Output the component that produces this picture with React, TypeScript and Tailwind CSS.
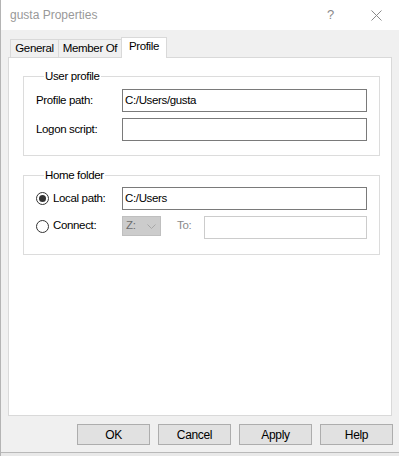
import React from "react";

function Radio({ checked }: { checked?: boolean }) {
  return (
    <span className="flex h-[13px] w-[13px] shrink-0 items-center justify-center rounded-full border border-[#333333] bg-white">
      {checked && <span className="h-[7px] w-[7px] rounded-full bg-[#333333]" />}
    </span>
  );
}

function TextBox({ value, disabled }: { value?: string; disabled?: boolean }) {
  return (
    <div
      className={`flex h-[23px] flex-1 items-center bg-white pl-[2px] text-black ${
        disabled ? "border border-[#cccccc]" : "border border-[#7a7a7a]"
      }`}
    >
      {value}
    </div>
  );
}

function Group({ title, children }: { title: string; children: React.ReactNode }) {
  return (
    <fieldset className="border border-[#dcdcdc] pl-[12px] pr-[12px]">
      <legend className="ml-[8px] px-[1px] leading-[14px] text-black">{title}</legend>
      {children}
    </fieldset>
  );
}

function Button({ label }: { label: string }) {
  return (
    <button className="flex h-[21px] w-[73px] items-center justify-center border border-[#adadad] bg-[#e1e1e1] text-[12px] text-black">
      {label}
    </button>
  );
}

export default function App() {
  return (
    <div
      className="flex h-[456px] w-[399px] flex-col overflow-hidden border-l border-[#b4b4b4] bg-[#f0f0f0] text-[11.5px] tracking-[-0.35px]"
      style={{ fontFamily: '"Liberation Sans", Arial, sans-serif' }}
    >
      {/* title bar */}
      <div className="flex h-[30px] shrink-0 items-center bg-white">
        <span className="ml-[9px] text-[12px] tracking-normal text-[#999999]">gusta Properties</span>
        <span className="ml-auto text-[13px] text-[#8a8a8a]">?</span>
        <svg className="ml-[37px] mr-[17px]" width="11" height="11" viewBox="0 0 11 11">
          <path d="M0.5 0.5 L10.5 10.5 M10.5 0.5 L0.5 10.5" stroke="#8a8a8a" strokeWidth="1" fill="none" />
        </svg>
      </div>

      <div className="ml-[7px] mr-[7px] flex flex-col">
        {/* tabs */}
        <div className="relative z-10 -mb-px mt-[7px] flex h-[21px] items-end whitespace-nowrap pl-[2px]">
          <div className="flex h-[19px] w-[49px] items-center justify-center border border-[#d9d9d9] bg-[#f0f0f0] text-black">
            General
          </div>
          <div className="flex h-[19px] w-[62px] items-center justify-center border-y border-[#d9d9d9] bg-[#f0f0f0] text-black">
            Member Of
          </div>
          <div className="flex h-[21px] w-[46px] items-center justify-center border-x border-t border-[#d9d9d9] bg-white pb-[2px] text-black">
            Profile
          </div>
        </div>

        {/* panel */}
        <div className="flex h-[359px] flex-col border border-[#d9d9d9] bg-white pl-[14px] pr-[11px]">
          <div className="mt-[11px]">
            <Group title="User profile">
              <div className="flex flex-col gap-[6px] pb-[14px] pt-[6px]">
                <div className="flex items-center">
                  <span className="w-[86px] text-black">Profile path:</span>
                  <TextBox value="C:/Users/gusta" />
                </div>
                <div className="flex items-center">
                  <span className="w-[86px] text-black">Logon script:</span>
                  <TextBox />
                </div>
              </div>
            </Group>
          </div>

          <div className="mt-[12px]">
            <Group title="Home folder">
              <div className="flex flex-col gap-[6px] pb-[15px] pt-[5px]">
                <div className="flex items-center">
                  <div className="flex w-[86px] items-center gap-[4px]">
                    <Radio checked />
                    <span className="text-black">Local path:</span>
                  </div>
                  <TextBox value="C:/Users" />
                </div>
                <div className="flex items-start">
                  <div className="flex h-[20px] w-[86px] items-center gap-[4px]">
                    <Radio />
                    <span className="text-black">Connect:</span>
                  </div>
                  <div className="flex h-[20px] w-[39px] items-center justify-between border border-[#bfbfbf] bg-[#cccccc] pl-[3px] pr-[4px] text-[#6d6d6d]">
                    <span>Z:</span>
                    <svg width="9" height="5" viewBox="0 0 9 5">
                      <path d="M0.5 0.5 L4.5 4.5 L8.5 0.5" stroke="#a8a8a8" strokeWidth="1" fill="none" />
                    </svg>
                  </div>
                  <span className="ml-[16px] flex h-[20px] w-[27px] items-center text-[#8a8a8a]">To:</span>
                  <TextBox disabled />
                </div>
              </div>
            </Group>
          </div>
        </div>
      </div>

      {/* buttons */}
      <div className="mr-[6px] mt-[8px] flex justify-end gap-[8px]">
        <Button label="OK" />
        <Button label="Cancel" />
        <Button label="Apply" />
        <Button label="Help" />
      </div>

      <div className="mt-[7px] h-px bg-[#b9b9b9]" />
      <div className="flex-1 bg-[#e9e9e9]" />
    </div>
  );
}
